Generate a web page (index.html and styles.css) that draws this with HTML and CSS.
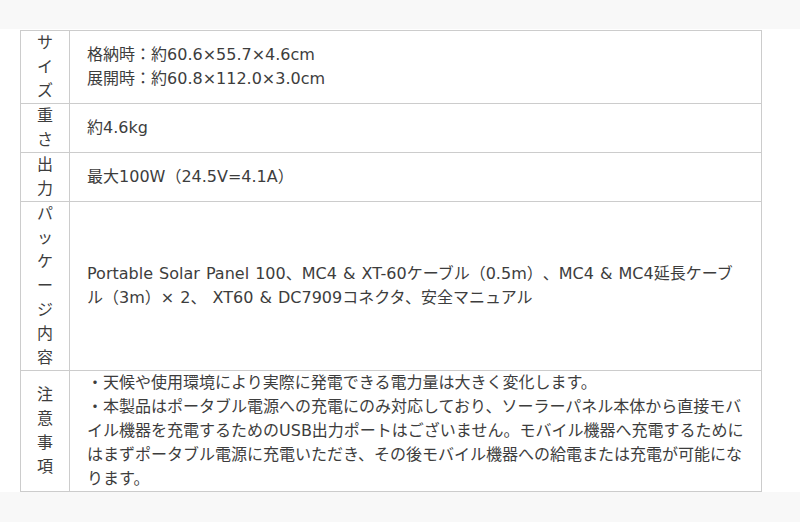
FILE: index.html
```html
<!DOCTYPE html>
<html lang="ja">
<head>
<meta charset="utf-8">
<link rel="stylesheet" href="styles.css">
</head>
<body>
<div class="top-band"></div>
<section class="spec">
  <table class="spec-table">
    <tr>
      <th>サイズ</th>
      <td>格納時：約60.6×55.7×4.6cm<br>展開時：約60.8×112.0×3.0cm</td>
    </tr>
    <tr>
      <th>重さ</th>
      <td>約4.6kg</td>
    </tr>
    <tr>
      <th>出力</th>
      <td>最大100W（24.5V=4.1A）</td>
    </tr>
    <tr>
      <th>パッケージ内容</th>
      <td>Portable Solar Panel 100、MC4 &amp; XT-60ケーブル（0.5m）、MC4 &amp; MC4延長ケーブル（3m）× 2、 XT60 &amp; DC7909コネクタ、安全マニュアル</td>
    </tr>
    <tr>
      <th>注意事項</th>
      <td>・天候や使用環境により実際に発電できる電力量は大きく変化します。<br>・本製品はポータブル電源への充電にのみ対応しており、ソーラーパネル本体から直接モバイル機器を充電するためのUSB出力ポートはございません。モバイル機器へ充電するためにはまずポータブル電源に充電いただき、その後モバイル機器への給電または充電が可能になります。</td>
    </tr>
  </table>
</section>
<div class="bottom-band"></div>
</body>
</html>
```
FILE: styles.css
```css
html, body {
  margin: 0;
  padding: 0;
  background: #f8f8f8;
}
body {
  font-family: "DejaVu Sans", "Noto Sans CJK JP", sans-serif;
  color: #3d3d3d;
  font-size: 16px;
  line-height: 24px;
  text-spacing-trim: space-all;
}
.top-band {
  height: 29px;
  background: #f8f8f8;
}
.spec {
  background: #ffffff;
  padding: 1px 0 0 20px;
}
.spec-table {
  border-collapse: collapse;
  width: 742px;
}
.spec-table th,
.spec-table td {
  border: 1px solid #cccccc;
  vertical-align: middle;
}
.spec-table th {
  width: 16px;
  padding: 0 16px;
  font-weight: normal;
  text-align: center;
}
.spec-table td {
  padding: 0 16px 0 17px;
  text-align: left;
  word-spacing: 1px;
}
.bottom-band {
  height: 40px;
  background: #f8f8f8;
}
```
